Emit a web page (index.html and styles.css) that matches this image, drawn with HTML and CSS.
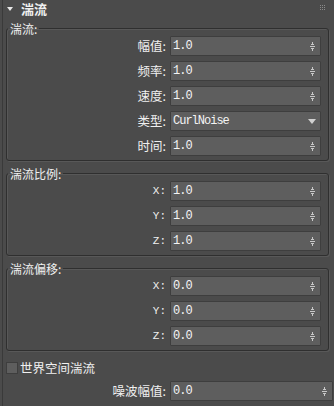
FILE: index.html
```html
<!DOCTYPE html>
<html lang="zh">
<head>
    <meta charset="UTF-8">
    <title>湍流</title>
    <link rel="stylesheet" href="styles.css">
</head>
<body>
    <div class="panel">
        <div class="header">
            <span class="caret"></span>
            <span class="title">湍流</span>
            <svg class="grip" width="6" height="6" viewBox="0 0 6 6">
                <g fill="#8a8a8a">
                    <rect x="0" y="0" width="1" height="1"/><rect x="2" y="0" width="1" height="1"/><rect x="4" y="0" width="1" height="1"/>
                    <rect x="0" y="2" width="1" height="1"/><rect x="2" y="2" width="1" height="1"/><rect x="4" y="2" width="1" height="1"/>
                    <rect x="0" y="4" width="1" height="1"/><rect x="2" y="4" width="1" height="1"/><rect x="4" y="4" width="1" height="1"/>
                </g>
            </svg>
        </div>

        <fieldset class="group">
            <legend>湍流:</legend>
            <div class="row"><span class="label">幅值:</span><div class="field"><span class="value">1.0</span><span class="spin"></span></div></div>
            <div class="row"><span class="label">频率:</span><div class="field"><span class="value">1.0</span><span class="spin"></span></div></div>
            <div class="row"><span class="label">速度:</span><div class="field"><span class="value">1.0</span><span class="spin"></span></div></div>
            <div class="row"><span class="label">类型:</span><div class="field"><span class="value">CurlNoise</span><span class="drop"></span></div></div>
            <div class="row"><span class="label">时间:</span><div class="field"><span class="value">1.0</span><span class="spin"></span></div></div>
        </fieldset>

        <fieldset class="group">
            <legend>湍流比例:</legend>
            <div class="row"><span class="label axis">X:</span><div class="field"><span class="value">1.0</span><span class="spin"></span></div></div>
            <div class="row"><span class="label axis">Y:</span><div class="field"><span class="value">1.0</span><span class="spin"></span></div></div>
            <div class="row"><span class="label axis">Z:</span><div class="field"><span class="value">1.0</span><span class="spin"></span></div></div>
        </fieldset>

        <fieldset class="group">
            <legend>湍流偏移:</legend>
            <div class="row"><span class="label axis">X:</span><div class="field"><span class="value">0.0</span><span class="spin"></span></div></div>
            <div class="row"><span class="label axis">Y:</span><div class="field"><span class="value">0.0</span><span class="spin"></span></div></div>
            <div class="row"><span class="label axis">Z:</span><div class="field"><span class="value">0.0</span><span class="spin"></span></div></div>
        </fieldset>

        <div class="check"><span class="box"></span>世界空间湍流</div>

        <div class="row outer"><span class="label">噪波幅值:</span><div class="field"><span class="value">0.0</span><span class="spin"></span></div></div>
    </div>
</body>
</html>
```

FILE: styles.css
```css
body {
    margin: 0;
    background-color: #4b4b4b;
    color: #f0f0f0;
    font-family: "Noto Sans CJK SC", "Noto Sans", sans-serif;
    font-size: 12px;
}

.panel {
    height: 406px;
    border-left: 1px solid #3a3a3a;
    margin-left: 2px;
    box-sizing: border-box;
}

.header {
    height: 18px;
    display: flex;
    align-items: center;
    position: relative;
}
.caret {
    width: 0;
    height: 0;
    border-left: 3px solid transparent;
    border-right: 3px solid transparent;
    border-top: 4px solid #e8e8e8;
    margin-left: 4px;
    margin-right: 8px;
}
.title {
    font-weight: bold;
    font-size: 13px;
    line-height: 18px;
}
.grip {
    position: absolute;
    right: 8px;
    top: 5px;
}

.group {
    margin: 4px 5px 0 3px;
    padding: 1px 7px 4px 0;
    border: 1px solid #2f2f2f;
    border-radius: 3px;
    box-shadow: inset 1px 1px 0 #585858, 1px 1px 0 #585858;
    display: grid;
    row-gap: 5px;
}
.group + .group {
    margin-top: 6px;
}
.group legend {
    line-height: 13px;
    padding: 0 2px;
    margin-left: 1px;
}

.row {
    display: grid;
    grid-template-columns: 159px 1fr;
    column-gap: 4px;
    align-items: center;
}
.label {
    text-align: right;
    line-height: 20px;
    font-size: 12.5px;
}
.label.axis {
    font-family: "Liberation Mono", monospace;
    font-size: 11px;
}

.field {
    height: 20px;
    box-sizing: border-box;
    background-color: #5e5e5e;
    border: 1px solid #3e3e3e;
    border-radius: 1px;
    display: flex;
    align-items: center;
    justify-content: space-between;
    padding: 0 5px 0 2px;
}
.value {
    font-family: "Liberation Mono", monospace;
    font-size: 12px;
    letter-spacing: -1px;
    color: #f4f4f4;
}
.spin {
    width: 5px;
    height: 9px;
    background:
        linear-gradient(#c8c8c8, #c8c8c8) 0 4px / 5px 1px no-repeat,
        conic-gradient(from 150deg at 50% 0, #c8c8c8 60deg, transparent 0) 0 0 / 5px 3px no-repeat,
        conic-gradient(from -30deg at 50% 100%, #c8c8c8 60deg, transparent 0) 0 6px / 5px 3px no-repeat;
}
.drop {
    width: 0;
    height: 0;
    border-left: 4px solid transparent;
    border-right: 4px solid transparent;
    border-top: 5px solid #d0d0d0;
    margin-right: -1px;
}

.check {
    display: flex;
    align-items: center;
    margin: 9px 0 0 3px;
    line-height: 16px;
    font-size: 12.5px;
}
.box {
    width: 10px;
    height: 10px;
    background-color: #5e5e5e;
    border: 1px solid #3e3e3e;
    margin-right: 2px;
}

.row.outer {
    margin: 5px 1px 0 4px;
}
```
